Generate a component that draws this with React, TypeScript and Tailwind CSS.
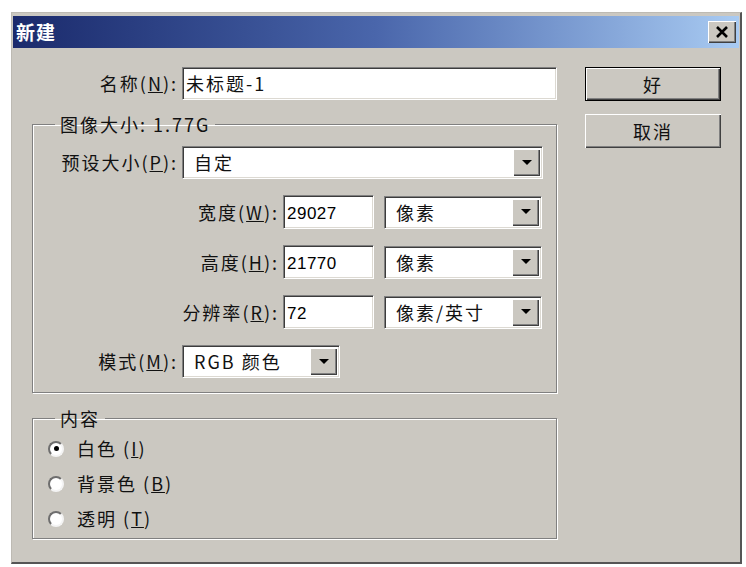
import React from 'react'

const font = 'font-["Noto_Sans_CJK_SC","Noto_Sans",sans-serif] text-[18px] tracking-[2px] text-[#111]'
const sunken = 'border border-t-[#808080] border-l-[#808080] border-b-white border-r-white shadow-[inset_1px_1px_0_#3c3c3c,inset_-1px_-1px_0_#dcd9d2] bg-white'
const raised = 'bg-[#cbc8c1] shadow-[inset_1px_1px_0_#fff,inset_-1px_-1px_0_#404040,inset_-2px_-2px_0_#808080]'
const etched = 'border border-[#808080] shadow-[inset_1px_1px_0_#fff,1px_1px_0_#fff]'

function Label({ text, mn, after = '):', w }: { text: string; mn: string; after?: string; w: string }) {
  return (
    <div className={`${w} shrink-0 flex justify-end pr-[4px] ${font}`}>
      <span>
        {text}(<u>{mn}</u>{after}
      </span>
    </div>
  )
}

function Arrow() {
  return (
    <div className={`w-[27px] h-full flex items-center justify-center ${raised}`}>
      <svg width="10" height="6" viewBox="0 0 10 6">
        <polygon points="0,0 10,0 5,5" fill="#000" />
      </svg>
    </div>
  )
}

function Select({ value, w }: { value: string; w: string }) {
  return (
    <div className={`${w} h-[33px] flex items-stretch p-[2px] ${sunken}`}>
      <div className={`flex-1 flex items-center pl-[9px] ${font}`}>{value}</div>
      <Arrow />
    </div>
  )
}

function NumInput({ value }: { value: string }) {
  return (
    <div className={`w-[91px] h-[34px] pl-[3px] pt-[5px] ${sunken}`}>
      <span className='font-["Liberation_Sans",sans-serif] text-[17px] leading-[20px] tracking-[0.5px] text-black'>{value}</span>
    </div>
  )
}

function Radio({ checked, label, mn }: { checked?: boolean; label: string; mn: string }) {
  return (
    <div className="flex items-center h-[35px]">
      <div className="w-[16px] h-[16px] rounded-full bg-white border-2 border-t-[#6e6e6e] border-l-[#6e6e6e] border-b-[#f4f4f4] border-r-[#f4f4f4] flex items-center justify-center">
        {checked && <div className="w-[5px] h-[5px] rounded-full bg-black" />}
      </div>
      <span className={`ml-[13px] ${font}`}>
        {label} (<u>{mn}</u>)
      </span>
    </div>
  )
}

export default function App() {
  return (
    <div className="w-[746px] h-[567px] bg-white pt-[12px] pl-[11px]">
      <div className="w-[731px] h-[552px] bg-[#cbc8c1] border-t border-l border-t-[#bdbab3] border-l-[#bdbab3] border-b-2 border-r-2 border-b-[#555] border-r-[#555] flex flex-col">
        {/* Title bar */}
        <div className="mx-[1px] mt-[3px] h-[32px] bg-gradient-to-r from-[#1b2a6c] via-[#4a66ab] to-[#a9cbf2] flex items-center justify-between pl-[3px] pr-[3px]">
          <span className='font-["Noto_Sans_CJK_SC",sans-serif] font-bold text-[19px] text-white tracking-[1px]'>新建</span>
          <div className={`w-[28px] h-[22px] flex items-center justify-center ${raised}`}>
            <svg width="14" height="12" viewBox="0 0 14 12">
              <path d="M2 1 L12 11 M12 1 L2 11" stroke="#000" strokeWidth="2.6" />
            </svg>
          </div>
        </div>

        {/* Body */}
        <div className="flex pl-[20px] pt-[19px]">
          <div className="w-[525px] flex flex-col">
            <div className="flex items-center">
              <Label text="名称" mn="N" w="w-[150px]" />
              <div className={`w-[377px] h-[33px] flex items-center pl-[3px] ${sunken}`}>
                <span className={font}>未标题-1</span>
              </div>
            </div>

            <fieldset className={`mt-[15px] w-[525px] h-[278px] ${etched}`}>
              <legend className={`ml-[22px] px-[5px] leading-[18px] ${font}`}>图像大小: 1.77G</legend>
              <div className="flex flex-col gap-[16px] pt-[13px]">
                <div className="flex items-center">
                  <Label text="预设大小" mn="P" w="w-[149px]" />
                  <Select value="自定" w="w-[361px]" />
                </div>
                {[
                  ['宽度', 'W', '29027', '像素'],
                  ['高度', 'H', '21770', '像素'],
                  ['分辨率', 'R', '72', '像素/英寸'],
                ].map(([t, m, v, u]) => (
                  <div key={t} className="flex items-center">
                    <Label text={t} mn={m} w="w-[250px]" />
                    <NumInput value={v} />
                    <div className="ml-[10px]">
                      <Select value={u} w="w-[158px]" />
                    </div>
                  </div>
                ))}
                <div className="flex items-center">
                  <Label text="模式" mn="M" w="w-[149px]" />
                  <Select value="RGB 颜色" w="w-[158px]" />
                </div>
              </div>
            </fieldset>

            <fieldset className={`mt-[16px] w-[525px] h-[130px] ${etched}`}>
              <legend className={`ml-[22px] px-[5px] leading-[18px] ${font}`}>内容</legend>
              <div className="flex flex-col pl-[15px] pt-[4px]">
                <Radio checked label="白色" mn="I" />
                <Radio label="背景色" mn="B" />
                <Radio label="透明" mn="T" />
              </div>
            </fieldset>
          </div>

          {/* Buttons */}
          <div className="ml-[28px] flex flex-col gap-[13px]">
            <div className="w-[136px] h-[34px] border border-black">
              <div className={`w-full h-full flex items-center justify-center ${raised}`}>
                <span className={font}>好</span>
              </div>
            </div>
            <div className={`w-[136px] h-[34px] flex items-center justify-center ${raised}`}>
              <span className={font}>取消</span>
            </div>
          </div>
        </div>
      </div>
    </div>
  )
}
